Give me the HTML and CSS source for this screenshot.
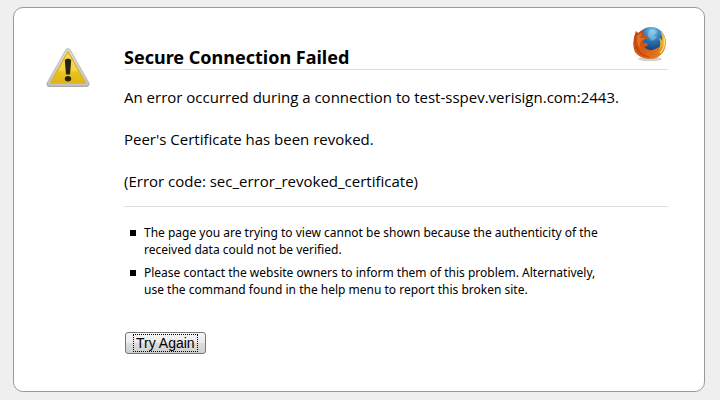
FILE: index.html
```
<!DOCTYPE html>
<html lang="en">
<head>
  <meta charset="utf-8">
  <title>Secure Connection Failed</title>
  <link rel="stylesheet" href="styles.css">
</head>
<body>
  <main class="error-page">
    <svg class="warning-icon" viewBox="0 0 44 40" aria-hidden="true">
      <defs>
        <linearGradient id="warn-fill" x1="0" y1="0" x2="0" y2="1">
          <stop offset="0" stop-color="#f6da4c"/>
          <stop offset=".5" stop-color="#efca22"/>
          <stop offset="1" stop-color="#e2b314"/>
        </linearGradient>
        <linearGradient id="warn-edge" x1="0" y1="0" x2="0" y2="1">
          <stop offset="0" stop-color="#dededa"/>
          <stop offset="1" stop-color="#c4c4c0"/>
        </linearGradient>
      </defs>
      <path d="M22 3.500L40.500 36H3.500Z" fill="#aaa" stroke="#aaaaa6" stroke-width="6" stroke-linejoin="round"/>
      <path d="M22 3.500L40.500 35.500H3.500Z" fill="#ddd" stroke="url(#warn-edge)" stroke-width="4.500" stroke-linejoin="round"/>
      <path d="M22 3.500L39.500 35H4.500Z" fill="url(#warn-fill)" stroke="#dcb42a" stroke-width="1.500" stroke-linejoin="round"/>
      <path d="M22 5L12 23Q25 24 32 23Z" fill="#fff0a0" opacity=".3"/>
      <path d="M18.800 12Q22 9 25.200 12L24 26.500H20Z" fill="#262610"/>
      <ellipse cx="22" cy="30.800" rx="3.200" ry="2.700" fill="#262610"/>
    </svg>

    <div class="error-content">
      <header class="error-title">
        <h1>Secure Connection Failed</h1>
        <svg class="firefox-logo" viewBox="0 0 36 36" aria-hidden="true">
          <defs>
            <radialGradient id="globe" cx=".55" cy=".15" r=".85">
              <stop offset="0" stop-color="#7cc6ea"/>
              <stop offset=".4" stop-color="#2a74b4"/>
              <stop offset="1" stop-color="#0c1f50"/>
            </radialGradient>
            <linearGradient id="fox" x1="0" y1="0" x2="1" y2="1">
              <stop offset="0" stop-color="#b8420f"/>
              <stop offset=".55" stop-color="#dc5a14"/>
              <stop offset="1" stop-color="#e88a1e"/>
            </linearGradient>
            <linearGradient id="tail" x1="0" y1="0" x2="0" y2="1">
              <stop offset="0" stop-color="#f0cc58"/>
              <stop offset=".55" stop-color="#eba628"/>
              <stop offset="1" stop-color="#d65c14"/>
            </linearGradient>
          </defs>
          <ellipse cx="18" cy="33" rx="12" ry="2" fill="#777" opacity=".35"/>
          <circle cx="19" cy="15.500" r="14.500" fill="url(#globe)"/>
          <path d="M17 4Q23 2 25 6L22 9L25 12L20 15L16 10Z" fill="#a7d9ee" opacity=".45"/>
          <path d="M28 5Q35 10 34 19Q32 29 23 32Q14 33 10 28Q21 31 26 24Q30 18 27 12Q30 13 30 16Q31 10 28 5Z" fill="url(#tail)"/>
          <path d="M4 5L6 7Q9 4 12 4L11 8L15 10Q16 12 12 14L11 17Q14 16 16 18Q15 21 12 21Q17 26 23 23L27 21Q27 27 21 29Q27 29 31 24Q28 33 18 33Q8 33 3 26Q-1 17 4 5Z" fill="url(#fox)"/>
          <path d="M5 10Q7 7 10 7L8 12L13 12L9 15Q7 19 9 22Q4 20 5 10Z" fill="#ef8a32" opacity=".6"/>
          <path d="M4 20Q7 29 17 31" fill="none" stroke="#a8340e" stroke-width="1.500" opacity=".5"/>
          <path d="M32 12Q34 21 28 27" fill="none" stroke="#f9e478" stroke-width="1.300"/>
        </svg>
      </header>

      <section class="error-short">
        <p>An error occurred during a connection to test-sspev.verisign.com:2443.</p>
        <p>Peer's Certificate has been revoked.</p>
        <p>(Error code: sec_error_revoked_certificate)</p>
      </section>

      <ul class="error-long">
        <li>The page you are trying to view cannot be shown because the authenticity of the received data could not be verified.</li>
        <li>Please contact the website owners to inform them of this problem. Alternatively, use the command found in the help menu to report this broken site.</li>
      </ul>

      <button class="try-again" type="button"><span>Try Again</span></button>
    </div>
  </main>
</body>
</html>
```

FILE: styles.css
```
* {
  box-sizing: border-box;
}
body {
  margin: 7px 15px 8px 13px;
  background: #efefef;
  color: #000;
  font-family: "Noto Sans", "Open Sans", sans-serif;
}
.error-page {
  display: flex;
  align-items: flex-start;
  gap: 34px;
  padding: 18px 36px 37px 32px;
  background: #fff;
  border: 1px solid #999;
  border-radius: 10px;
}
.warning-icon {
  flex: none;
  width: 44px;
  height: 40px;
  margin-top: 22px;
}
.error-content {
  flex: 1;
  min-width: 0;
}
.error-title {
  display: flex;
  align-items: flex-end;
  justify-content: space-between;
  height: 44px;
  border-bottom: 1px solid #ddd;
}
.error-title h1 {
  margin: 0;
  font-size: 18px;
  line-height: 24px;
}
.firefox-logo {
  flex: none;
  width: 36px;
  height: 36px;
  margin-bottom: 7px;
}
.error-short {
  padding: 17px 0 14px;
  border-bottom: 1px solid #ddd;
  font-family: "Open Sans", "Noto Sans", sans-serif;
  font-size: 15px;
  line-height: 21px;
}
.error-short p {
  margin: 0 0 21px;
}
.error-short p:last-child {
  margin-bottom: 0;
}
.error-long {
  max-width: 490px;
  margin: 17px 0 33px;
  padding: 0 0 0 6px;
  list-style: none;
  font-size: 12px;
  line-height: 17px;
}
.error-long li {
  display: flex;
  gap: 8px;
  margin-bottom: 6px;
}
.error-long li::before {
  content: "";
  flex: none;
  width: 6px;
  height: 6px;
  margin-top: 6px;
  background: #000;
}
.try-again {
  height: 22px;
  margin-left: 1px;
  padding: 0 7px;
  background: linear-gradient(#f4f4f4, #ececec 48%, #dcdcdc 52%, #d0d0d0);
  border: 1px solid #777;
  border-radius: 3px;
  color: #000;
  font-family: "Liberation Sans", Arial, sans-serif;
  font-size: 14px;
}
.try-again span {
  display: block;
  padding: 0 2px;
  border: 1px dotted #000;
  line-height: 16px;
}
```
